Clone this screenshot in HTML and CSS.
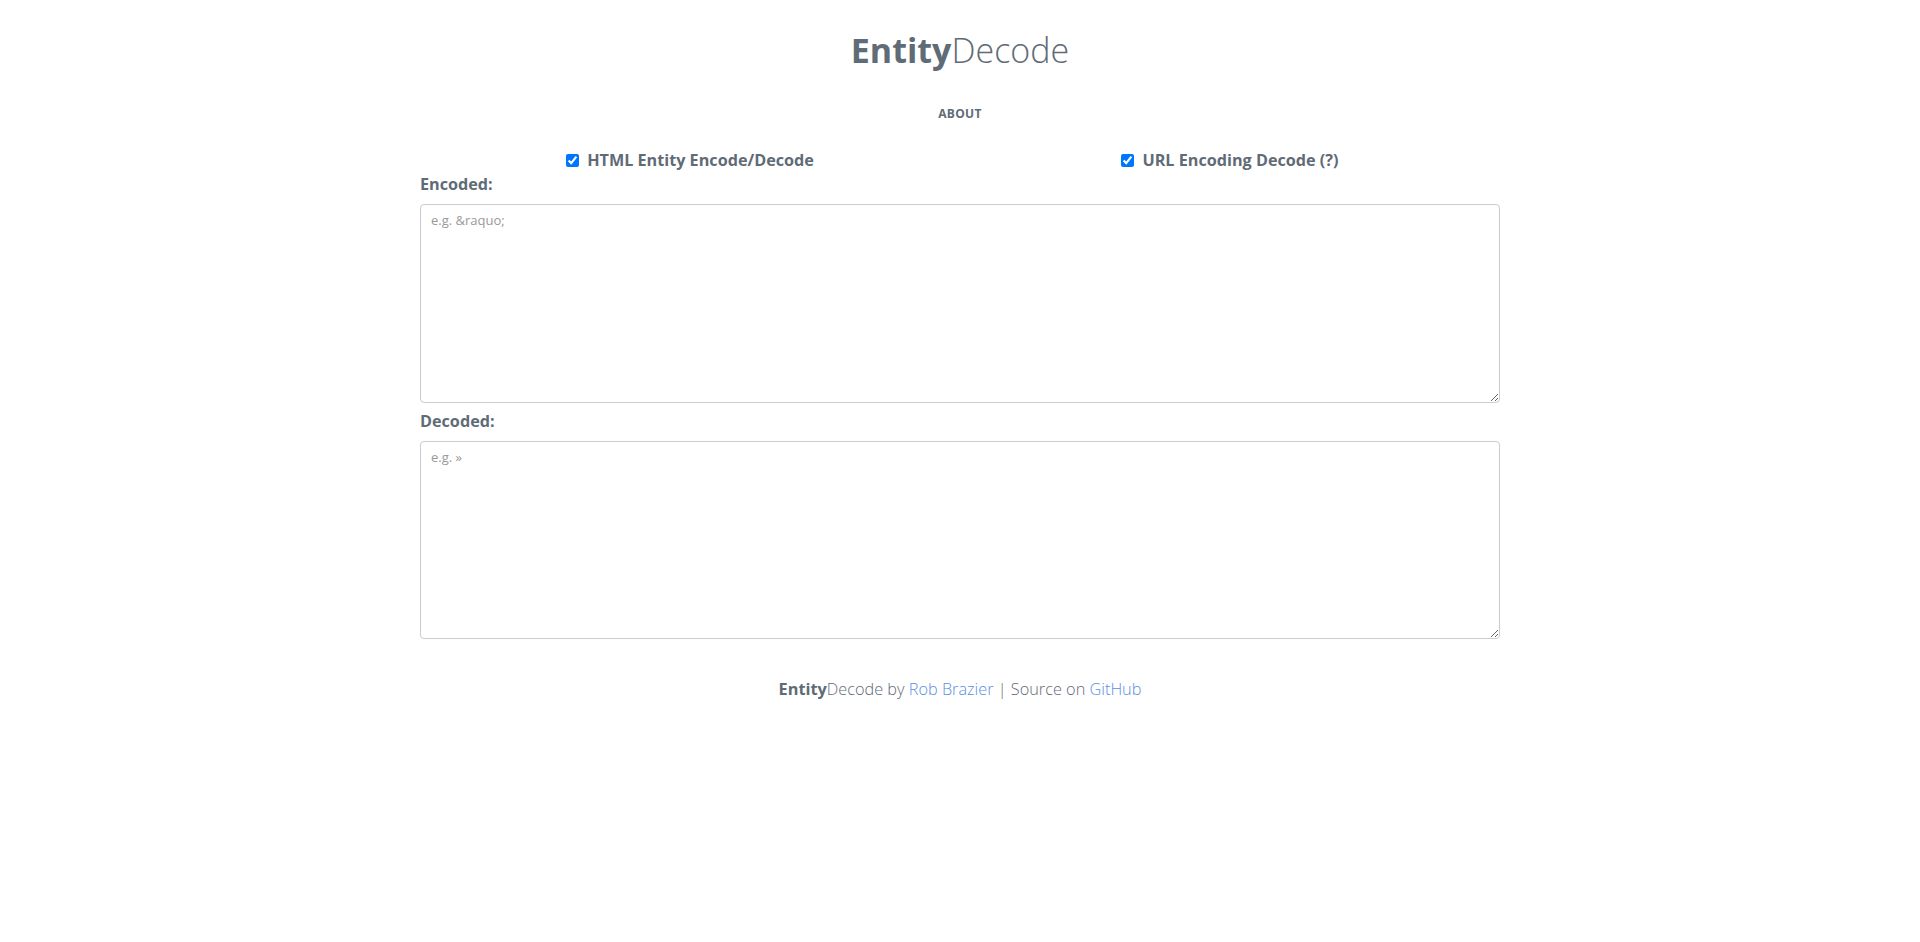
FILE: index.html
```html
<!DOCTYPE html>
<html lang="en">
<head>
<meta charset="utf-8">
<title>EntityDecode</title>
<link rel="stylesheet" href="styles.css">
</head>
<body>
<div class="page">
  <header class="header">
    <h1 class="logo"><span class="logo-bold">Entity</span><span class="logo-light">Decode</span></h1>
    <nav class="nav"><a class="nav-link" href="#">About</a></nav>
  </header>
  <div class="options">
    <label class="option"><input type="checkbox" class="check" checked><span>HTML Entity Encode/Decode</span></label>
    <label class="option"><input type="checkbox" class="check" checked><span>URL Encoding Decode (?)</span></label>
  </div>
  <label class="field-label" for="enc">Encoded:</label>
  <textarea id="enc" class="box box-first" placeholder="e.g. &amp;raquo;"></textarea>
  <label class="field-label field-second" for="dec">Decoded:</label>
  <textarea id="dec" class="box box-second" placeholder="e.g. &raquo;"></textarea>
  <footer class="footer"><span class="logo-bold">Entity</span>Decode by <a class="link" href="#">Rob Brazier</a> | Source on <a class="link" href="#">GitHub</a></footer>
</div>
</body>
</html>
```

FILE: styles.css
```css
html, body {
  margin: 0;
  padding: 0;
  background: #ffffff;
}
body {
  font-family: "Open Sans", "Noto Sans", sans-serif;
  color: #5f6b76;
}
.page {
  width: 1080px;
  margin: 0 auto;
  display: flex;
  flex-direction: column;
}
.header {
  display: flex;
  flex-direction: column;
  align-items: center;
}
.logo {
  margin: 30px 0 0 0;
  font-size: 34px;
  line-height: 40px;
  font-weight: 400;
  color: #5f6b76;
}
.logo-bold {
  font-weight: 700;
}
.logo-light {
  font-weight: 300;
}
.nav {
  margin-top: 34px;
  line-height: 16px;
}
.nav-link {
  font-size: 12px;
  font-weight: 700;
  letter-spacing: 0.3px;
  text-transform: uppercase;
  color: #5f6b76;
  text-decoration: none;
}
.options {
  display: grid;
  grid-template-columns: 1fr 1fr;
  margin-top: 26px;
}
.option {
  display: flex;
  align-items: center;
  justify-content: center;
  font-size: 16.2px;
  font-weight: 700;
  line-height: 24px;
}
.check {
  width: 13px;
  height: 13px;
  margin: 0 8px 0 0;
}
.field-label {
  font-size: 16.2px;
  font-weight: 700;
  line-height: 24px;
}
.field-second {
  margin-top: 6px;
}
.box {
  display: block;
  box-sizing: border-box;
  width: 1080px;
  margin: 8px 0 0 0;
  padding: 6px 10px;
  border: 1px solid #cccccc;
  border-radius: 4px;
  font-family: "Open Sans", "Noto Sans", sans-serif;
  font-size: 13px;
  line-height: 18px;
  color: #555555;
  resize: vertical;
}
.box::placeholder {
  color: #999999;
}
.box-first {
  height: 199px;
}
.box-second {
  height: 198px;
}
.footer {
  margin-top: 38px;
  text-align: center;
  font-size: 16.3px;
  font-weight: 300;
  line-height: 24px;
}
.footer .logo-bold {
  font-weight: 700;
}
.link {
  color: #5a8ee6;
  text-decoration: none;
}
```
